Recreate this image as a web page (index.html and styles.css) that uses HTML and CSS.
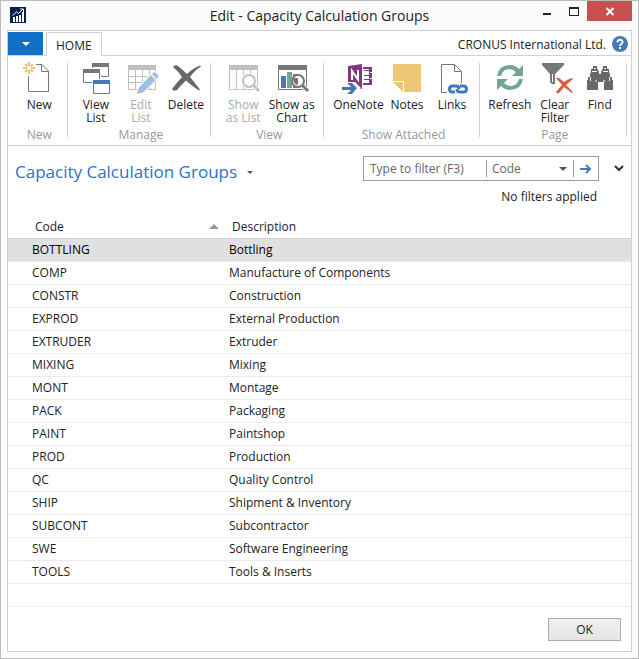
FILE: index.html
```html
<!DOCTYPE html>
<html lang="en">
<head>
<meta charset="utf-8">
<meta name="viewport" content="width=device-width, initial-scale=1">
<title>Edit - Capacity Calculation Groups</title>
<link rel="stylesheet" href="styles.css">
</head>
<body>
<div class="window">
  <header class="titlebar">
    <div class="titlebar-side">
      <svg class="app-icon" viewBox="0 0 16 16" aria-hidden="true">
        <path fill="#03204f" d="M0 0h16v16H0z"/>
        <path fill="#fff" d="M3 10h2v5H3zM6 9h2v6H6zM9 8h2v7H9zM12 5h2v10h-2z"/>
        <path fill="none" stroke="#fff" d="M2.500 8.500 6.500 5l2 1.500L13 2M10 2h3.500v3"/>
      </svg>
    </div>
    <h1 class="window-title">Edit - Capacity Calculation Groups</h1>
    <div class="titlebar-side window-controls">
      <button type="button" class="control" aria-label="Minimize"><svg viewBox="0 0 27 20"><path fill="#222" d="M10 12h8v2h-8z"/></svg></button>
      <button type="button" class="control" aria-label="Maximize"><svg viewBox="0 0 27 20"><path fill="#222" fill-rule="evenodd" d="M9 6h10v9H9zM10 8v6h8V8z"/></svg></button>
      <button type="button" class="control close" aria-label="Close"><svg viewBox="0 0 45 20"><path fill="none" stroke="#fff" stroke-width="2" d="m19.500 7 7 7m0-7-7 7"/></svg></button>
    </div>
  </header>

  <main class="panel">
    <nav class="tabs">
      <button type="button" class="app-menu" aria-label="Application menu"><svg viewBox="0 0 8 4"><path fill="#fff" d="M0 0h8L4 4z"/></svg></button>
      <a class="tab" href="#home">HOME</a>
      <span class="company">CRONUS International Ltd.</span>
      <button type="button" class="help" aria-label="Help">
        <svg viewBox="0 0 16 16"><circle cx="8" cy="8" r="8" fill="#447ab8"/><path fill="none" stroke="#fff" stroke-width="2" d="M5.500 6.300C5.500 2.900 10.800 3 10.500 6.200 10.300 7.700 8.100 7.800 8.100 10"/><path fill="#fff" d="M7 11h2v2H7z"/></svg>
      </button>
    </nav>

    <div class="ribbon" id="home">
      <section class="group">
        <div class="commands">
          <button type="button" class="command">
            <svg viewBox="0 0 32 32"><path fill="none" stroke="#777" d="M13 2.500h6l6.500 6.500v20.500h-20V14M18.500 3v6.500H25"/><path stroke="#edc576" stroke-width="2" d="M6 0v4M6 8v4M0 6h4M8 6h4M2 2l2.500 2.500M7.500 7.500 10 10M10 2 7.500 4.500M4.500 7.500 2 10"/></svg>
            <span>New</span>
          </button>
        </div>
        <h2>New</h2>
      </section>

      <section class="group">
        <div class="commands">
          <button type="button" class="command">
            <svg viewBox="0 0 32 32"><path fill="#fff" stroke="#777" d="M12.500 1.500h16v13h-16z"/><path fill="#777" d="M12 1h17v4H12z"/><path fill="#fff" d="M2 6h19v16H2z"/><path fill="#fff" stroke="#777" d="M3.500 7.500h16v13h-16z"/><path fill="#777" d="M3 7h17v4H3z"/><path fill="#fff" d="M12 17h18v15H12z"/><path fill="#fff" stroke="#777" d="M13.500 18.500h16v13h-16z"/><path fill="#447ab8" d="M13 18h17v4H13z"/></svg>
            <span>View<br>List</span>
          </button>
          <button type="button" class="command" disabled>
            <svg viewBox="0 0 32 32"><path fill="none" stroke="#c0c0c0" d="M3.500 3.500h27v24h-27zM10.500 8v20M17.500 8v20M24.500 8v20M3 14.500h28M3 20.500h28"/><path fill="#c0c0c0" d="M3 3h28v5H3z"/><path fill="#9fc0e2" stroke="#fff" stroke-width="2" paint-order="stroke" d="m12 32 1.500-6L26 13l5 5-13 12.500zM27 12l1.500-1.500q1-1 2 0l2.500 2.500q1 1 0 2L31.500 17z"/></svg>
            <span>Edit<br>List</span>
          </button>
          <button type="button" class="command">
            <svg viewBox="0 0 32 32"><path fill="#686868" d="M3 5q2-3 5-1 5 4 9 8 6-6 13-8.500l1 1Q25 8 20 15q5 6 10 12.500l-1 1Q23 25 16 18.500 11 23 7 28q-3 2-5-1 3-4 10-12Q8 9 3 5z"/></svg>
            <span>Delete</span>
          </button>
        </div>
        <h2>Manage</h2>
      </section>

      <section class="group">
        <div class="commands">
          <button type="button" class="command" disabled>
            <svg viewBox="0 0 32 32"><path fill="none" stroke="#c0c0c0" d="M2.500 3.500h28v24h-28zM9.500 8v20M16.500 8v20M23.500 8v20"/><path fill="#c0c0c0" d="M2 3h29v5H2z"/><path stroke="#fff" stroke-width="5" d="m26 23 6 6"/><circle cx="22" cy="19" r="6" fill="#fff" stroke="#fff" stroke-width="4"/><circle cx="22" cy="19" r="6" fill="#fff" stroke="#c0c0c0" stroke-width="2"/><path stroke="#c0c0c0" stroke-width="3" d="m26 23 6 6"/></svg>
            <span>Show<br>as List</span>
          </button>
          <button type="button" class="command wide">
            <svg viewBox="0 0 32 32"><path fill="#fff" stroke="#777" d="M2.500 3.500h28v24h-28z"/><path fill="#777" d="M2 3h29v5H2z"/><path fill="#447ab8" d="M5 14h5v12H5z"/><path fill="#72a594" d="M11 10h5v16h-5z"/><path fill="#777" d="M17 12h5v14h-5z"/><path stroke="#fff" stroke-width="5" d="m26 23 6 6"/><circle cx="22" cy="19" r="6" fill="#fff" stroke="#777" stroke-width="2"/><path fill="#777" d="M17 16h5v7q-5-1-5-7z"/><path stroke="#777" stroke-width="3" d="m26 23 6 6"/></svg>
            <span>Show as<br>Chart</span>
          </button>
        </div>
        <h2>View</h2>
      </section>

      <section class="group">
        <div class="commands">
          <button type="button" class="command wide">
            <svg viewBox="0 0 32 32"><path fill="#80397b" d="M6 4 20 2v25L6 24zM21 5h9v5h-1v1h1v5h-1v1h1v6h-9v-2h6v-3h-5v-1h5v-3h-5v-1h5V9h-5V8h5V7h-6z"/><path fill="#fff" d="M28 10h2v1h-2zM28 16h2v1h-2z"/><path fill="none" stroke="#fff" stroke-width="2" d="M10 18V9l6 8.500V8"/><path fill="#fff" d="M0 23h6v-3h7l6 6-6 6H5v-4H0z"/><path fill="#447ab8" d="M0 25h9l-4-4h5l5 5-5 6H5l4-4H0z"/></svg>
            <span>OneNote</span>
          </button>
          <button type="button" class="command">
            <svg viewBox="0 0 32 32"><path fill="#edc576" d="M2 2h28v28H13V19H2zM2 20h10v10z"/></svg>
            <span>Notes</span>
          </button>
          <button type="button" class="command">
            <svg viewBox="0 0 32 32"><path fill="none" stroke="#777" d="M11 30.500H5.500v-28h13l7 7V21M18.500 3v6.500H25"/><path fill="none" stroke="#447ab8" stroke-width="3" d="M19 30h-2.500q-3 0-3-3t3-3H20q3 0 3 3M24 24h3.500q3 0 3 3t-3 3H24q-3 0-3-3"/></svg>
            <span>Links</span>
          </button>
        </div>
        <h2>Show Attached</h2>
      </section>

      <section class="group">
        <div class="commands">
          <button type="button" class="command">
            <svg viewBox="0 0 32 32"><path fill="#72a594" d="M3 14Q5 3 16 3q5 0 9 4l4-4v11H18l4-4q-3-3-7-3-6 0-8 7zM29 17q-2 11-13 11-5 0-9-4l-4 4V17h11l-4 4q3 3 7 3 6 0 8-7z"/></svg>
            <span>Refresh</span>
          </button>
          <button type="button" class="command">
            <svg viewBox="0 0 32 32"><path fill="#777" d="M3 1h22v2l-9 9v10h-3l-2-2v-8L3 3z"/><path fill="#fff" d="M13 12h1v8h-1z"/><path fill="#da5e3b" d="M17 16q2-1 3 0l5 4q4-3 8-4l1 1-7 6 7 7-1 1-8-6-5 6q-2 1-3-1l6-7z"/></svg>
            <span>Clear<br>Filter</span>
          </button>
          <button type="button" class="command">
            <svg viewBox="0 0 32 32"><path fill="#686868" d="M9 4h4v3h1v2h1v3h2V9h1V7h1V4h4v3h2v4h1v4h2v3h1v10h-9v-8h-6v8H3V18h1v-3h2v-4h1V7h2z"/><path fill="none" stroke="#fff" d="M10 6.500h2M20 6.500h2M8 9.500h5M19 9.500h5M6.500 15v4M25.500 15v4M12 18v2M20 18v2"/></svg>
            <span>Find</span>
          </button>
        </div>
        <h2>Page</h2>
      </section>
    </div>

    <div class="page-head">
      <button type="button" class="page-title">Capacity Calculation Groups <svg viewBox="0 0 6 3"><path fill="#555" d="M0 0h6L3 3z"/></svg></button>
      <div class="filter-area">
        <form class="filter">
          <input type="text" placeholder="Type to filter (F3)" aria-label="Type to filter">
          <span class="field-picker">
            <select aria-label="Filter field"><option>Code</option><option>Description</option></select>
          </span>
          <button type="submit" aria-label="Apply filter"><svg viewBox="0 0 12 10"><path fill="none" stroke="#447ab8" stroke-width="2" d="M0 5h10M6 1l4 4-4 4"/></svg></button>
        </form>
        <button type="button" class="expand" aria-label="Expand filter pane"><svg viewBox="0 0 10 7"><path fill="none" stroke="#333" stroke-width="2" d="m1 1 4 4 4-4"/></svg></button>
        <p class="filter-status">No filters applied</p>
      </div>
    </div>

    <table class="list">
      <thead>
        <tr><th class="code" scope="col" aria-sort="ascending"><div class="sorted">Code <svg viewBox="0 0 10 5"><path fill="#999" d="m0 5 5-5 5 5z"/></svg></div></th><th scope="col">Description</th></tr>
      </thead>
      <tbody>
        <tr class="selected"><td>BOTTLING</td><td>Bottling</td></tr>
        <tr><td>COMP</td><td>Manufacture of Components</td></tr>
        <tr><td>CONSTR</td><td>Construction</td></tr>
        <tr><td>EXPROD</td><td>External Production</td></tr>
        <tr><td>EXTRUDER</td><td>Extruder</td></tr>
        <tr><td>MIXING</td><td>Mixing</td></tr>
        <tr><td>MONT</td><td>Montage</td></tr>
        <tr><td>PACK</td><td>Packaging</td></tr>
        <tr><td>PAINT</td><td>Paintshop</td></tr>
        <tr><td>PROD</td><td>Production</td></tr>
        <tr><td>QC</td><td>Quality Control</td></tr>
        <tr><td>SHIP</td><td>Shipment &amp; Inventory</td></tr>
        <tr><td>SUBCONT</td><td>Subcontractor</td></tr>
        <tr><td>SWE</td><td>Software Engineering</td></tr>
        <tr><td>TOOLS</td><td>Tools &amp; Inserts</td></tr>
        <tr><td></td><td></td></tr>
      </tbody>
    </table>

    <footer class="actions"><button type="button" class="ok">OK</button></footer>
  </main>
</div>
</body>
</html>
```
FILE: styles.css
```css
* {
  box-sizing: border-box;
}

body {
  margin: 0;
  font: 12px/16px "Open Sans", "Noto Sans", sans-serif;
  color: #222;
}

button,
input,
select {
  margin: 0;
  padding: 0;
  border: 0;
  background: none;
  font: inherit;
  color: inherit;
}

h1,
h2,
p {
  margin: 0;
  font-weight: 400;
}

svg {
  display: block;
  flex: none;
}

.window {
  display: flex;
  flex-direction: column;
  min-height: 100vh;
  padding: 0 6px 6px;
  border: 1px solid #bcbcbc;
  background: #fbfbfb;
}

.titlebar {
  display: flex;
  height: 29px;
}

.titlebar-side {
  flex: 1;
  display: flex;
  align-items: flex-start;
}

.app-icon {
  width: 16px;
  margin: 6px 3px;
}

.window-title {
  font-size: 14px;
  line-height: 30px;
  white-space: nowrap;
}

.window-controls {
  justify-content: flex-end;
}

.control {
  width: 27px;
  height: 20px;
}

.close {
  width: 45px;
  background: #c75050;
}

.panel {
  flex: 1;
  display: flex;
  flex-direction: column;
  border: 1px solid #d0d0d0;
  background: #fff;
}

.tabs {
  display: flex;
  align-items: flex-start;
  height: 24px;
}

.app-menu {
  display: flex;
  align-items: center;
  justify-content: center;
  align-self: stretch;
  width: 35px;
  margin: 1px 3px 0 0;
  background: #1170c6;
}

.app-menu svg {
  width: 8px;
}

.tab {
  z-index: 1;
  height: 24px;
  margin-top: 1px;
  padding: 0 9px;
  border: 1px solid #d0d0d0;
  border-bottom: 0;
  background: #fff;
  line-height: 25px;
  color: #222;
  text-decoration: none;
}

.company {
  margin: 6px 6px 0 auto;
}

.help {
  width: 16px;
  margin: 5px 3px 0 0;
}

.ribbon {
  display: flex;
  padding: 6px 4px 3px 0;
  border: 1px solid #d0d0d0;
  border-width: 1px 0;
}

.group {
  display: flex;
  flex-direction: column;
  flex: 144 1 0;
  height: 80px;
  padding-left: 3px;
  background: linear-gradient(#d0d0d0, #d0d0d0) right 1px / 1px 74px no-repeat;
}

.group:nth-child(1) {
  flex-grow: 58;
}

.group:nth-child(3) {
  flex-grow: 113;
}

.group:nth-child(4) {
  flex-grow: 156;
}

.group:nth-child(5) {
  flex-grow: 148;
}

.commands {
  flex: 1;
  display: flex;
  justify-content: center;
}

.command {
  display: flex;
  flex-direction: column;
  align-items: center;
  width: 45px;
  line-height: 13px;
  white-space: nowrap;
}

.command.wide {
  width: 52px;
}

.command svg {
  width: 32px;
  height: 32px;
  margin-bottom: 4px;
  overflow: visible;
}

.command:disabled {
  color: #aaa;
}

.group h2 {
  font-size: 12px;
  line-height: 14px;
  text-align: center;
  color: #999;
}

.page-head {
  display: flex;
  align-items: flex-start;
  justify-content: space-between;
  height: 70px;
  padding: 10px 7px 0;
}

.page-title {
  display: flex;
  align-items: center;
  gap: 10px;
  font-size: 17px;
  line-height: 32px;
  color: #1e74cc;
}

.page-title svg {
  width: 6px;
}

.filter-area {
  display: grid;
  grid-template-columns: 236px 10px;
  column-gap: 15px;
  row-gap: 8px;
  align-items: center;
}

.filter {
  display: flex;
  align-items: center;
  height: 25px;
  border: 1px solid #999;
}

.filter input {
  flex: 1;
  min-width: 0;
  padding: 0 6px;
  outline: 0;
}

.filter input::placeholder {
  color: #666;
  opacity: 1;
}

.field-picker {
  position: relative;
  width: 88px;
  border: 1px solid #999;
  border-width: 0 1px;
}

.field-picker::after {
  content: "";
  position: absolute;
  top: 7px;
  right: 6px;
  border: 4px solid transparent;
  border-top-color: #555;
  border-bottom: 0;
  pointer-events: none;
}

.filter select {
  appearance: none;
  display: block;
  width: 100%;
  height: 17px;
  padding-left: 5px;
  color: #666;
}

.filter button {
  width: 24px;
  padding: 0 6px;
}

.expand {
  width: 10px;
}

.filter-status {
  padding-right: 2px;
  text-align: right;
}

.list {
  width: 100%;
  border-collapse: collapse;
  table-layout: fixed;
}

.list th {
  height: 22px;
  padding: 0 0 0 11px;
  border-bottom: 1px solid #d0d0d0;
  font-weight: 400;
  text-align: left;
}

.list th.code {
  width: 213px;
  padding: 0 2px 0 27px;
}

.sorted {
  display: flex;
  align-items: center;
  justify-content: space-between;
}

.sorted svg {
  width: 10px;
}

.list td {
  height: 23px;
  padding: 0 0 0 8px;
  border-bottom: 1px solid #ececec;
}

.list td:first-child {
  padding-left: 24px;
}

.selected {
  background: #e0e0e0;
  color: #000;
}

.actions {
  display: flex;
  justify-content: flex-end;
  margin-top: auto;
  padding: 11px 10px 10px;
}

.ok {
  width: 73px;
  height: 23px;
  border: 1px solid #acacac;
  background: linear-gradient(#f0f0f0, #e5e5e5);
}
```
